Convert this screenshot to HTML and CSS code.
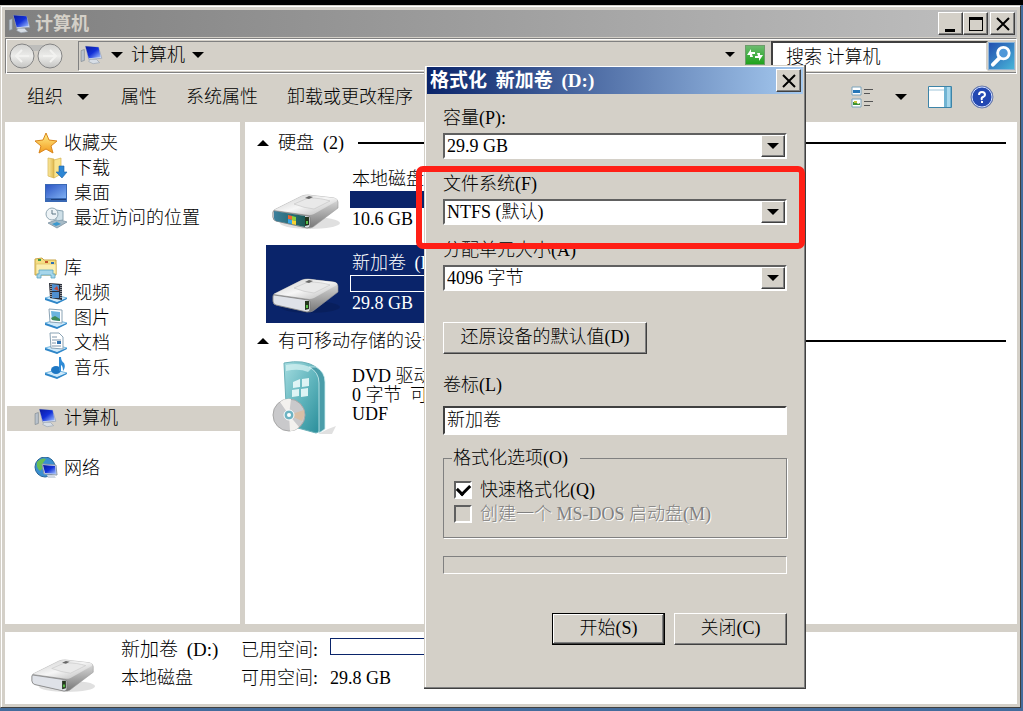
FILE: index.html
```html
<!DOCTYPE html>
<html lang="zh-CN">
<head>
  <meta charset="UTF-8" />
  <meta name="viewport" content="width=device-width, initial-scale=1.0"/>
  <title>计算机</title>
  <link rel="stylesheet" href="styles.css">
</head>
<body>

  <!-- shared icons -->
  <svg class="sprite" aria-hidden="true">
    <defs>
      <linearGradient id="screen" x1="0" y1="0" x2="1" y2="1">
        <stop offset="0" stop-color="#0a1a9c"/><stop offset=".5" stop-color="#1230d8"/><stop offset="1" stop-color="#a9c8ff"/>
      </linearGradient>
      <linearGradient id="metal" x1="0" y1="0" x2="1" y2="1">
        <stop offset="0" stop-color="#c9c9c9"/><stop offset=".5" stop-color="#f6f6f6"/><stop offset="1" stop-color="#b4b4b4"/>
      </linearGradient>
      <linearGradient id="side" x1="0" y1="0" x2="0" y2="1">
        <stop offset="0" stop-color="#e8e8e8"/><stop offset="1" stop-color="#777"/>
      </linearGradient>
      <linearGradient id="teal" x1="0" y1="0" x2="1" y2="1">
        <stop offset="0" stop-color="#a5dce0"/><stop offset=".5" stop-color="#5fb4bc"/><stop offset="1" stop-color="#258a97"/>
      </linearGradient>
      <linearGradient id="front" x1="0" y1="0" x2="1" y2="0">
        <stop offset="0" stop-color="#3d7f9c"/><stop offset=".5" stop-color="#2b6f7c"/><stop offset="1" stop-color="#1c5a55"/>
      </linearGradient>
      <linearGradient id="orb" x1="0" y1="0" x2="0" y2="1">
        <stop offset="0" stop-color="#d2d2d0"/><stop offset=".5" stop-color="#ececea"/><stop offset="1" stop-color="#c4c4c2"/>
      </linearGradient>
      <linearGradient id="folder" x1="0" y1="0" x2="1" y2="0">
        <stop offset="0" stop-color="#fbeaa0"/><stop offset="1" stop-color="#e0b84c"/>
      </linearGradient>
      <linearGradient id="gold" x1="0" y1="0" x2="0" y2="1">
        <stop offset="0" stop-color="#fff08a"/><stop offset="1" stop-color="#f39a1d"/>
      </linearGradient>
      <linearGradient id="desk" x1="0" y1="0" x2="1" y2="1">
        <stop offset="0" stop-color="#2c55c4"/><stop offset="1" stop-color="#7fb0f2"/>
      </linearGradient>
    </defs>

    <symbol id="i-computer" viewBox="0 0 22 20">
      <path d="M1 6l3-1v10l-3 1z" fill="#b9c2cc" stroke="#7d8791" stroke-width=".6"/>
      <path d="M5 2l12 1 3 10-12 1z" fill="#dfe7f2" stroke="#8e9ab0" stroke-width=".6"/>
      <path d="M5 2l12 1 2 9-11 1z" fill="url(#screen)"/>
      <path d="M9 14h6l3 3-6 1-4-2z" fill="#d7dee6" stroke="#9aa5b1" stroke-width=".6"/>
    </symbol>

    <symbol id="i-drive" viewBox="0 0 70 38">
      <ellipse cx="38" cy="30" rx="30" ry="6" fill="#000" opacity=".12"/>
      <path d="M2 17L30 3q3-1 6-1l26 3q4 1 4 4v6L41 34q-2 1-5 1L4 28q-3-1-3-4v-5z" fill="url(#side)" stroke="#999" stroke-width=".6"/>
      <path d="M2 17L30 3q3-1 6-1l26 3q4 1 3 3L42 21q-2 1-5 1z" fill="url(#metal)"/>
      <path d="M22 11l14-6q14 0 22 3l-16 8q-10-1-20-5z" fill="#e9e9e9" stroke="#c2c2c2" stroke-width=".6"/>
      <path d="M33 5l4-2 4 1-4 2z" fill="#666"/>
      <path d="M2 18l34 5q2 0 2 2v7q0 3-3 3L4 28q-3-1-3-4v-4q0-2 1-2z" fill="#dfe2e8" stroke="#777" stroke-width=".7"/>
      <path d="M33 24h4v8l-4 1z" fill="#24361f"/>
      <path d="M34 28h2v3h-2z" fill="#5ac04a"/>
    </symbol>

    <symbol id="i-sysdrive" viewBox="0 0 70 38">
      <use href="#i-drive"/>
      <path d="M2 18l31 5v11L4 28q-2-1-2-3z" fill="url(#front)"/>
      <path d="M16 22l4 1v4l-4-1z" fill="#f0662d"/><path d="M20 23l4 1v4l-4-1z" fill="#8cd03a"/>
      <path d="M16 26l4 1v4l-4-1z" fill="#37a5e8"/><path d="M20 27l4 1v4l-4-1z" fill="#f8d334"/>
    </symbol>

    <symbol id="i-tray" viewBox="0 0 24 22">
      <path d="M1 16l11-3 11 3-10 5z" fill="#cfe9fa" stroke="#58a9dc" stroke-width=".8"/>
      <path d="M1 16l12 4 10-4v1l-10 5-12-4z" fill="#2f86c8"/>
    </symbol>
  </svg>

  <div class="window">
    <div class="titlebar">
      <svg class="icon"><use href="#i-computer"/></svg>
      <span class="caption">计算机</span>
      <div class="controls">
        <button class="cap-btn" aria-label="最小化"><svg viewBox="0 0 16 16"><path d="M2 13h10v3H2z"/></svg></button>
        <button class="cap-btn" aria-label="最大化"><svg viewBox="0 0 16 16"><path d="M1 1h14v14H1zM2 4v10h12V4z" fill-rule="evenodd"/></svg></button>
        <button class="cap-btn close" aria-label="关闭窗口"><svg viewBox="0 0 16 16"><path d="M2 2l12 12M14 2L2 14" stroke="#000" stroke-width="2"/></svg></button>
      </div>
    </div>

    <div class="rebar">
      <svg class="nav-arrows" viewBox="0 0 56 28">
        <path d="M14 3h28v6H14z" fill="#bdbdbb"/>
        <g fill="url(#orb)" stroke="#858585">
          <circle cx="14" cy="14" r="12"/><circle cx="42" cy="14" r="12"/>
        </g>
        <g fill="none" stroke="#f2f2f0" stroke-width="2">
          <path d="M21 14H9M14 8l-6 6 6 6M35 14h12M42 8l6 6-6 6"/>
        </g>
      </svg>
      <div class="address">
        <svg class="icon"><use href="#i-computer"/></svg>
        <span class="tri"></span>
        <span>计算机</span>
        <span class="tri"></span>
        <span class="tri small"></span>
        <button class="refresh" aria-label="刷新">
          <svg viewBox="0 0 18 18"><path d="M1 9l4-6v3h4v2H6l1 3H4v-2zM17 9l-4 6v-3H9v-2h3l-1-3h3v2z" fill="#fff"/></svg>
        </button>
      </div>
      <input class="search" type="text" aria-label="搜索" value="搜索 计算机">
      <button class="search-btn" aria-label="开始搜索">
        <svg viewBox="0 0 26 26"><circle cx="15" cy="10" r="6" fill="#4f98d8" stroke="#fff" stroke-width="3"/><path d="M11 15l-7 7" stroke="#fff" stroke-width="4" stroke-linecap="round"/></svg>
      </button>
    </div>

    <div class="toolbar">
      <button class="tool organize">组织 <span class="tri"></span></button>
      <button class="tool">属性</button>
      <button class="tool">系统属性</button>
      <button class="tool">卸载或更改程序</button>
      <div class="tool-right">
        <button class="tool" aria-label="更改视图">
          <svg width="24" height="24" viewBox="0 0 24 24">
            <path d="M1 2h9v8H1zM1 14h9v8H1z" fill="#fff" stroke="#7ba3bb"/>
            <path d="M2 5h7v3H2z" fill="#2777b8"/><path d="M2 17h3l2 2 2-1v2H2z" fill="#3c9134"/><path d="M3 16h3v2H3z" fill="#c2c43d"/>
            <path d="M13 4.500h9M13 8.500h6M13 16.500h9M13 20.500h6" stroke="#555"/>
          </svg>
        </button>
        <span class="tri"></span>
        <button class="tool preview" aria-label="预览窗格">
          <svg width="24" height="22" viewBox="0 0 24 22">
            <path d="M.5.5h23v21H.5z" fill="#fff" stroke="#3d84a8"/>
            <path d="M1 4h15" stroke="#9fc6da"/><path d="M16 1h7v20h-7z" fill="#71b4d3"/><path d="M19 1h3v20h-3z" fill="#a9d8ec"/>
          </svg>
        </button>
        <button class="tool" aria-label="帮助">
          <svg width="24" height="24" viewBox="0 0 24 24">
            <circle cx="12" cy="12" r="11" fill="#2348b2" stroke="#6f7fa8"/><circle cx="12" cy="12" r="10" fill="none" stroke="#d6e2ff"/>
            <path d="M9 10q0-3 3-3t3 3q0 1-2 2t-1 3" fill="none" stroke="#fff" stroke-width="2"/><path d="M11 16h2v2h-2z" fill="#fff"/>
          </svg>
        </button>
      </div>
    </div>

    <div class="main">
      <nav class="sidebar">
        <a class="item" href="#">
          <svg class="icon" viewBox="0 0 24 22"><path d="M12 1l3 7 8 1-6 5 2 7-7-4-7 4 2-7-6-5 8-1z" fill="url(#gold)" stroke="#d9851b"/></svg>收藏夹</a>
        <a class="item sub" href="#">
          <svg class="icon" viewBox="0 0 24 22"><path d="M4 1l6 1v19l-6-2z" fill="url(#folder)" stroke="#d6b350" stroke-width=".7"/><path d="M10 3l7-2v16l-7 4z" fill="#f9e48e" stroke="#d6b350" stroke-width=".7"/><path d="M15 9h5v6h3l-5 6-6-6h3z" fill="#2d86d4" stroke="#1c62a8" stroke-width=".6"/></svg>下载</a>
        <a class="item sub" href="#">
          <svg class="icon" viewBox="0 0 24 22"><path d="M1 2h22v18H1z" fill="#3968b4"/><path d="M2 3h20v13H2z" fill="url(#desk)"/><path d="M7 17h15v1H7z" fill="#1d3d78"/></svg>桌面</a>
        <a class="item sub" href="#">
          <svg class="icon" viewBox="0 0 24 22"><path d="M4 16l10-4 9 3-10 6z" fill="#a6bac6" stroke="#71889a" stroke-width=".7"/><path d="M12 3l7 1v9l-7 1z" fill="#cfe0e8" stroke="#8ba5b3"/><circle cx="8" cy="7" r="6" fill="#edf3f6" stroke="#93a9b5"/><path d="M8 3v4h4" fill="none" stroke="#5d7685"/><path d="M8 17l5-2 4 2-5 2z" fill="#3a98ce"/></svg>最近访问的位置</a>
        <a class="item after-gap" href="#">
          <svg class="icon" viewBox="0 0 24 22"><path d="M1 2l7-1 2 2h12v15H1z" fill="#f5de83" stroke="#c9a546"/><path d="M2 7h20v10H2z" fill="#fbeeb0" stroke="#d8b95a" stroke-width=".6"/><path d="M4 2h3v2H4z" fill="#3d9b4a"/><path d="M11 4h3v2h-3z" fill="#c2542b"/><path d="M17 5h3v2h-3z" fill="#2f6fb4"/><path d="M5 13h14v4h2v4h-4v-3H7v3H3v-4h2z" fill="#a6d6ea" stroke="#5ca4c4" stroke-width=".8"/></svg>库</a>
        <a class="item sub" href="#">
          <svg class="icon" viewBox="0 0 24 22"><use href="#i-tray"/><path d="M5 1l13 1v16L6 16z" fill="#2b2f3a"/><path d="M8 2l7 1v6H8zM8 10h7v6H8z" fill="#4f8fd0"/><path d="M10 7l3-3 2 5z" fill="#c24a3a"/><path d="M7 2v14M17 3v14" stroke="#fff" stroke-dasharray="1 1"/></svg>视频</a>
        <a class="item sub" href="#">
          <svg class="icon" viewBox="0 0 24 22"><use href="#i-tray"/><path d="M5 2l13 1v13L6 15z" fill="#fff" stroke="#8aa3b5"/><path d="M7 4l9 1v9l-8-1z" fill="#6cb4de"/><path d="M7 11l4-2 5 3v2l-8-1z" fill="#3f8b5a"/></svg>图片</a>
        <a class="item sub" href="#">
          <svg class="icon" viewBox="0 0 24 22"><use href="#i-tray"/><path d="M6 1h9l4 4v12L7 16z" fill="#fff" stroke="#8aa3b5"/><path d="M8 5h5M8 8h9M8 11h4M8 14h9" stroke="#7f95aa"/><path d="M13 9h4v3h-4z" fill="#3072b0"/></svg>文档</a>
        <a class="item sub" href="#">
          <svg class="icon" viewBox="0 0 24 22"><use href="#i-tray"/><ellipse cx="12" cy="13" rx="5" ry="4" fill="#1e77c4"/><path d="M15 0h2q0 4 3 6 2 4-1 8 0-5-2-6v6h-2z" fill="#2f8bd6"/></svg>音乐</a>
        <a class="item after-gap selected" href="#">
          <svg class="icon"><use href="#i-computer"/></svg>计算机</a>
        <a class="item after-gap" href="#">
          <svg class="icon" viewBox="0 0 24 22"><circle cx="11" cy="10" r="10" fill="#3a8fd0" stroke="#2a6596"/><path d="M3 5q5-5 9-3l-3 4 1 4-4 4q-4-3-3-9z" fill="#69bd54"/><path d="M8 7l14 1 1 10-13-1z" fill="#dce6f2" stroke="#8795a8"/><path d="M9 8l12 1 1 8-11-1z" fill="url(#screen)"/><path d="M13 18h7l2 3h-8z" fill="#cfd8e2"/></svg>网络</a>
      </nav>

      <section class="content">
        <h2 class="group"><span class="tri up"></span>硬盘 <span class="total">(2)</span></h2>
        <div class="tile">
          <svg class="tile-icon"><use href="#i-sysdrive"/></svg>
          <div class="tile-info">
            <div>本地磁盘</div>
            <div class="usage full"></div>
            <div>10.6 GB</div>
          </div>
        </div>
        <div class="tile active">
          <svg class="tile-icon"><use href="#i-drive"/></svg>
          <div class="tile-info">
            <div>新加卷 <span class="spaced">(D:)</span></div>
            <div class="usage"></div>
            <div>29.8 GB</div>
          </div>
        </div>
        <h2 class="group second"><span class="tri up"></span>有可移动存储的设备</h2>
        <div class="tile dvd">
          <svg class="tile-icon" viewBox="0 0 70 76">
            <path d="M56 70l8-3-4 8H46z" fill="#000" opacity=".12"/>
            <path d="M12 4q20-4 32 4 7 5 7 15v48l-7 3-29-8z" fill="url(#teal)" stroke="#6bb0b8"/>
            <path d="M44 8q9 5 9 15v47l-6 4V24q0-11-10-16z" fill="#4a9da9" stroke="#cfeef0" stroke-width=".8"/>
            <path d="M14 6q14-3 26 3l-4 4q-9-4-22-1z" fill="#d8f3f3" opacity=".7"/>
            <path d="M21 23l7-3v8l-7 1zM30 20l7-1v8l-7 1zM20 31l7-1v7l-7 1zM29 30l7-1v8l-7 1z" fill="#eafafa" opacity=".9"/>
            <circle cx="17" cy="56" r="16" fill="#c9c9cb" stroke="#a7a7a7"/>
            <path d="M17 56L8 43q5-4 11-3zM17 56l10 12q-4 4-9 4z" fill="#f3f1ee"/>
            <path d="M17 56l15-5q1 6-2 11z" fill="#d8bfa6"/>
            <circle cx="17" cy="56" r="5" fill="#6db3c2" stroke="#fff"/><circle cx="17" cy="56" r="2" fill="#fff"/>
          </svg>
          <div class="tile-info">
            <div>DVD 驱动</div>
            <div>0 字节 <span class="spaced">可</span></div>
            <div>UDF</div>
          </div>
        </div>
      </section>
    </div>

    <div class="details">
      <svg class="detail-icon"><use href="#i-drive"/></svg>
      <div class="detail-col">
        <div class="detail-name">新加卷 <span class="spaced">(D:)</span></div>
        <div>本地磁盘</div>
      </div>
      <div class="detail-grid">
        <span>已用空间:</span><div class="used"></div>
        <span>可用空间:</span><span>29.8 GB</span>
      </div>
    </div>
  </div>

  <form class="dialog" role="dialog" aria-label="格式化 新加卷 (D:)">
    <div class="dialog-title">
      <span>格式化 <span class="spaced">新加卷</span> <span class="spaced">(D:)</span></span>
      <button type="button" class="cap-btn close" aria-label="关闭对话框"><svg viewBox="0 0 16 16"><path d="M2 2l12 12M14 2L2 14" stroke="#000" stroke-width="2"/></svg></button>
    </div>
    <div class="dialog-body">
      <label for="capacity">容量(P):</label>
      <div class="combo">
        <select id="capacity"><option>29.9 GB</option></select>
        <span class="drop"><span class="tri"></span></span>
      </div>

      <label for="fs">文件系统(F)</label>
      <div class="combo">
        <select id="fs"><option>NTFS (默认)</option></select>
        <span class="drop"><span class="tri"></span></span>
      </div>

      <label for="unit">分配单元大小(A)</label>
      <div class="combo">
        <select id="unit"><option>4096 字节</option></select>
        <span class="drop"><span class="tri"></span></span>
      </div>

      <button type="button" class="btn restore">还原设备的默认值(D)</button>

      <label class="volume-label" for="volume">卷标(L)</label>
      <input class="volume" id="volume" type="text" value="新加卷">

      <fieldset>
        <legend>格式化选项(O)</legend>
        <div class="check"><input type="checkbox" id="quick" checked><label for="quick">快速格式化(Q)</label></div>
        <div class="check"><input type="checkbox" id="msdos" disabled><label for="msdos">创建一个 MS-DOS 启动盘(M)</label></div>
      </fieldset>

      <div class="progress"></div>

      <div class="actions">
        <button type="button" class="btn default">开始(S)</button>
        <button type="button" class="btn">关闭(C)</button>
      </div>
    </div>
    <div class="highlight"></div>
  </form>

</body>
</html>
```
FILE: styles.css
```css
* {
  box-sizing: border-box;
}

body {
  margin: 0;
  height: 100vh;
  min-height: 700px;
  display: flex;
  padding: 0 2px 3px 0;
  border-top: 5px solid #000;
  background: #446c9c;
  font-family: "Liberation Serif", "Noto Sans CJK SC", serif;
  font-size: 18px;
  font-weight: 300;
  line-height: 24px;
  color: #000;
  overflow: hidden;
  position: relative;
}

button,
input,
select {
  font: inherit;
  color: inherit;
  margin: 0;
  padding: 0;
  border-radius: 0;
}

button {
  background: none;
  border: 0;
}

.sprite {
  position: absolute;
  width: 0;
  height: 0;
}

.icon {
  width: 24px;
  height: 22px;
  flex: none;
}

.spaced {
  margin-left: 4px;
}

/* small black arrows */
.tri {
  border: 6px solid transparent;
  border-top-color: #000;
  border-bottom: 0;
  flex: none;
}

.tri.small {
  border-width: 5px 5px 0;
}

.tri.up {
  border-top: 0;
  border-bottom: 6px solid #000;
}

/* explorer window */
.window {
  flex: 1;
  min-width: 0;
  display: flex;
  flex-direction: column;
  background: #d4d0c8;
  border: 1px solid #d4d0c8;
  border-right-color: #404040;
  border-bottom-color: #404040;
  box-shadow: inset 1px 1px #fff;
  padding: 4px 3px 3px 4px;
}

.titlebar {
  display: flex;
  align-items: center;
  height: 27px;
  padding: 0 2px 0 3px;
  background: linear-gradient(to right, #808080, #c0c0c0);
}

.titlebar .caption {
  margin-left: 3px;
  color: #d4d0c8;
  font-weight: bold;
}

.controls {
  display: flex;
  margin-left: auto;
}

.cap-btn {
  display: flex;
  align-items: center;
  justify-content: center;
  width: 25px;
  height: 23px;
  background: #d4d0c8;
  border: 1px solid;
  border-color: #fff #404040 #404040 #fff;
  box-shadow: inset -1px -1px #808080;
}

.cap-btn svg {
  width: 16px;
  height: 16px;
}

.controls .close {
  margin-left: 2px;
}

.rebar {
  display: flex;
  align-items: center;
  height: 36px;
  margin-top: 1px;
  padding-right: 1px;
  border: 1px solid;
  border-color: #808080 #fff #fff #808080;
  box-shadow: inset 1px 1px #fff, inset 0 -1px #808080;
}

.nav-arrows {
  width: 56px;
  height: 28px;
  margin: 0 14px 0 2px;
}

.address {
  flex: 1;
  display: flex;
  align-items: center;
  height: 30px;
  padding: 0 5px 3px 1px;
  border: 1px solid;
  border-color: #808080 #d4d0c8 #fff #808080;
}

.address .tri {
  margin: 0 8px 0 7px;
}

.address .tri.small {
  margin: 0 10px 0 auto;
}

.refresh {
  width: 20px;
  height: 20px;
  background: linear-gradient(#6bbb6e, #1fa31c);
  border: 1px solid #6d9c6b;
}

.refresh svg {
  display: block;
}

.search {
  width: 217px;
  height: 30px;
  padding: 0 0 3px 13px;
  background: #fff;
  border: 2px solid;
  border-color: #404040 #d4d0c8 #fff #404040;
}

.search-btn {
  width: 27px;
  height: 28px;
  background: linear-gradient(135deg, #2350b0, #48b4d8);
  border: 1px solid #8fb4d6;
}

.search-btn svg {
  display: block;
  width: 25px;
  height: 26px;
}

.toolbar {
  display: flex;
  align-items: center;
  gap: 29px;
  height: 48px;
  padding: 0 23px 2px 22px;
}

.tool {
  display: flex;
  align-items: center;
  white-space: nowrap;
}

.organize {
  gap: 14px;
  margin-right: 3px;
}

.tool-right {
  display: flex;
  align-items: center;
  margin-left: auto;
}

.tool-right .tri {
  margin: 0 21px 0 20px;
}

.preview {
  margin-right: 18px;
}

.main {
  flex: 1;
  min-height: 0;
  display: flex;
  gap: 5px;
}

.sidebar {
  width: 235px;
  padding: 9px 0 0 2px;
  background: #fff;
}

.item {
  display: flex;
  align-items: center;
  gap: 6px;
  height: 25px;
  padding: 0 0 2px 27px;
  color: #000;
  text-decoration: none;
}

.item.sub {
  padding-left: 37px;
}

.item.after-gap {
  margin-top: 25px;
}

.item.selected {
  background: #d4d0c8;
}

.content {
  flex: 1;
  min-width: 0;
  padding: 9px 11px 0 12px;
  background: #fff;
}

.group {
  display: flex;
  align-items: center;
  margin: 0;
  font-size: 18px;
  font-weight: 300;
}

.group .tri {
  margin-right: 9px;
}

.group .total {
  margin-left: 9px;
}

.group::after {
  content: "";
  flex: 1;
  height: 2px;
  margin-left: 14px;
  background: #000;
}

.group.second {
  margin-top: 6px;
}

.tile {
  display: flex;
  align-items: center;
  width: 340px;
  height: 78px;
  margin: 6px 0 0 9px;
  padding: 0 6px 2px;
  line-height: 23px;
}

.tile-icon {
  width: 70px;
  height: 38px;
  margin: 32px 10px 0 0;
  flex: none;
  align-self: flex-start;
}

.tile-info {
  flex: 1;
}

.tile.active {
  background: #0a246a;
  color: #fff;
}

.usage {
  height: 17px;
  margin: 0 0 0 -2px;
  border: 1px solid #fff;
}

.usage.full {
  background: #0a246a;
  border-color: #0a246a;
}

.dvd {
  padding-bottom: 6px;
  line-height: 19px;
}

.dvd .tile-icon {
  height: 76px;
  margin-top: 0;
}

.details {
  display: flex;
  align-items: center;
  height: 72px;
  margin-top: 8px;
  padding: 0 0 8px 26px;
  background: #fff;
}

.detail-icon {
  width: 66px;
  height: 36px;
  margin: 24px 24px 0 0;
}

.detail-col,
.detail-grid {
  line-height: 28px;
}

.detail-col {
  width: 120px;
  white-space: nowrap;
}

.detail-name {
  font-size: 19px;
}

.detail-grid {
  display: grid;
  grid-template-columns: 79px 200px;
  column-gap: 10px;
}

.used {
  height: 17px;
  margin-top: 2px;
  border: 1px solid #0a246a;
}

/* format dialog, floats above the window */
.dialog {
  position: absolute;
  left: 424px;
  top: 60px;
  width: 382px;
  padding: 2px 3px 3px;
  background: #d4d0c8;
  box-shadow: inset -1px -1px #404040, inset -2px -2px #808080, inset 1px 1px #d4d0c8, inset 2px 2px #fff;
}

.dialog-title {
  display: flex;
  align-items: center;
  justify-content: space-between;
  height: 27px;
  padding: 0 2px 0 3px;
  background: linear-gradient(to right, #0a246a, #a6caf0);
  color: #fff;
  font-size: 19px;
  font-weight: bold;
}

.dialog-body {
  padding: 12px 16px 41px;
}

.dialog-body > label {
  display: block;
  margin-bottom: 3px;
}

.combo {
  display: grid;
  height: 26px;
  margin-bottom: 13px;
  background: #fff;
  border: 2px solid;
  border-color: #606060 #fff #fff #606060;
}

.combo select {
  grid-area: 1 / 1;
  appearance: none;
  height: 22px;
  line-height: 22px;
  padding: 0 28px 0 2px;
  background: none;
  border: 0;
}

.drop {
  grid-area: 1 / 1;
  justify-self: end;
  display: flex;
  align-items: center;
  justify-content: center;
  width: 24px;
  height: 22px;
  background: #d4d0c8;
  border: 1px solid;
  border-color: #fff #404040 #404040 #fff;
  box-shadow: inset -1px -1px #808080;
  pointer-events: none;
}

.btn {
  width: 113px;
  height: 32px;
  padding-bottom: 2px;
  border: 1px solid;
  border-color: #fff #404040 #404040 #fff;
  box-shadow: inset -1px -1px #808080;
}

.btn.default {
  border-color: #000;
  box-shadow: inset -1px -1px #404040, inset 1px 1px #fff, inset -2px -2px #808080;
}

.btn.restore {
  display: block;
  width: 204px;
  margin: 31px 0 19px;
}

.dialog-body > .volume-label {
  margin-bottom: 9px;
}

.volume {
  display: block;
  width: 100%;
  height: 29px;
  padding: 0 2px 5px;
  background: #fff;
  border: 2px solid;
  border-color: #404040 #fff #fff #404040;
}

fieldset {
  margin: 11px 0 18px;
  padding: 8px 10px 11px;
  border: 1px solid #808080;
  box-shadow: 1px 1px #fff;
}

legend {
  margin-left: -2px;
  padding: 0 12px 0 1px;
}

.check {
  display: flex;
  align-items: center;
  height: 24px;
}

.check input {
  appearance: none;
  display: flex;
  align-items: center;
  justify-content: center;
  width: 18px;
  height: 18px;
  margin-right: 8px;
  background: #fff;
  border: 2px solid;
  border-color: #606060 #fff #fff #606060;
}

.check input:checked::before {
  content: "";
  width: 10px;
  height: 6px;
  margin-bottom: 4px;
  border: 3px solid #000;
  border-top: 0;
  border-right: 0;
  transform: rotate(-45deg);
}

.check input:disabled {
  background: #d4d0c8;
}

.check input:disabled + label {
  color: #808080;
  text-shadow: 1px 1px #fff;
}

.progress {
  height: 18px;
  border: 1px solid;
  border-color: #808080 #fff #fff #808080;
}

.actions {
  display: flex;
  justify-content: flex-end;
  gap: 9px;
  margin-top: 39px;
}

/* red marker round the file system field */
.highlight {
  position: absolute;
  left: -8px;
  top: 101px;
  width: 389px;
  height: 83px;
  border: 6px solid #ff1f16;
  border-radius: 7px;
  pointer-events: none;
}
```
